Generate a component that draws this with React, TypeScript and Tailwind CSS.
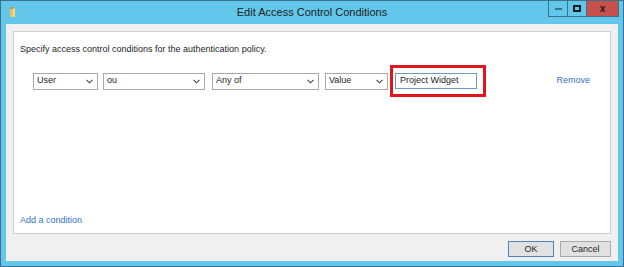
import React from "react";

const Chevron = () => (
  <svg width="7" height="5" viewBox="0 0 7 5" className="shrink-0">
    <path d="M0.5 0.8 L3.5 3.8 L6.5 0.8" fill="none" stroke="#444" strokeWidth="1.1" />
  </svg>
);

const Select = ({ label, width }: { label: string; width: string }) => (
  <div
    className={`flex h-[17px] items-center justify-between border border-[#a8a8a8] bg-white pl-[3px] pr-[4px] text-[9px] text-[#1e1e1e] ${width}`}
  >
    <span>{label}</span>
    <Chevron />
  </div>
);

export default function App() {
  return (
    <div
      className="flex h-[267px] w-[624px] flex-col border border-[#3d7089] bg-[#63c7ec] pb-[5px] pl-[5px] pr-[5px] text-[#1e1e1e]"
      style={{ fontFamily: '"Liberation Sans", Arial, sans-serif' }}
    >
      {/* title bar */}
      <div className="grid h-[23px] shrink-0 grid-cols-[1fr_auto_1fr] items-start">
        <div className="flex">
          <svg width="6" height="10" viewBox="0 0 6 10" className="ml-[4px] mt-[6px]">
            <rect x="0" y="1" width="5" height="9" fill="#e8c25a" />
            <rect x="0" y="0" width="3" height="2" fill="#c79a2e" />
            <rect x="3" y="2" width="2" height="8" fill="#f3dc8a" />
          </svg>
        </div>
        <div className="mt-[5px] text-[11px] leading-[13px] text-[#202020]">
          Edit Access Control Conditions
        </div>
        <div className="-mt-px mr-[-1px] flex h-[17px] justify-self-end">
          <div className="flex w-[20px] items-center justify-center border border-[#3d7089]">
            <div className="h-[2px] w-[7px] bg-[#3d6f86]" />
          </div>
          <div className="flex w-[19px] items-center justify-center border-y border-r border-[#3d7089]">
            <div className="h-[7px] w-[8px] border-2 border-[#1a1a1a]" />
          </div>
          <div className="flex w-[32px] items-center justify-center border-y border-r border-[#3d7089] bg-[#c8504b] text-[10px] font-bold text-[#1a1a1a]">
            x
          </div>
        </div>
      </div>

      {/* client area */}
      <div className="flex flex-1 flex-col bg-[#f0f0f0] px-[7px] pb-[4px] pt-[7px]">
        <div className="flex flex-1 flex-col border border-[#cfcfcf] bg-white pb-[7px] pl-[6px] pr-[20px] pt-[11px]">
          <div className="text-[9px] leading-[12px]">
            Specify access control conditions for the authentication policy.
          </div>
          <div className="mt-[10px] flex items-center pl-[13px]">
            <Select label="User" width="w-[65px]" />
            <div className="ml-[5px]">
              <Select label="ou" width="w-[102px]" />
            </div>
            <div className="ml-[7px]">
              <Select label="Any of" width="w-[107px]" />
            </div>
            <div className="ml-[6px]">
              <Select label="Value" width="w-[63px]" />
            </div>
            <div className="ml-[2px] border-[3px] border-[#e0161e] py-[5px] pl-[2px] pr-[6px]">
              <div className="flex h-[16px] w-[82px] items-center border border-[#6f98bd] bg-white pl-[4px] text-[9px]">
                Project Widget
              </div>
            </div>
            <div className="ml-auto text-[9px] text-[#3173c9]">Remove</div>
          </div>
          <div className="mt-auto text-[9px] leading-[12px] text-[#3173c9]">Add a condition</div>
        </div>
        <div className="mt-[7px] flex justify-end gap-[6px]">
          <button className="h-[16px] w-[46px] border border-[#4a86bb] bg-[#e1e1e1] text-[9px] leading-none text-[#1e1e1e]">
            OK
          </button>
          <button className="h-[16px] w-[51px] border border-[#a9a9a9] bg-[#e1e1e1] text-[9px] leading-none text-[#1e1e1e]">
            Cancel
          </button>
        </div>
      </div>
    </div>
  );
}
